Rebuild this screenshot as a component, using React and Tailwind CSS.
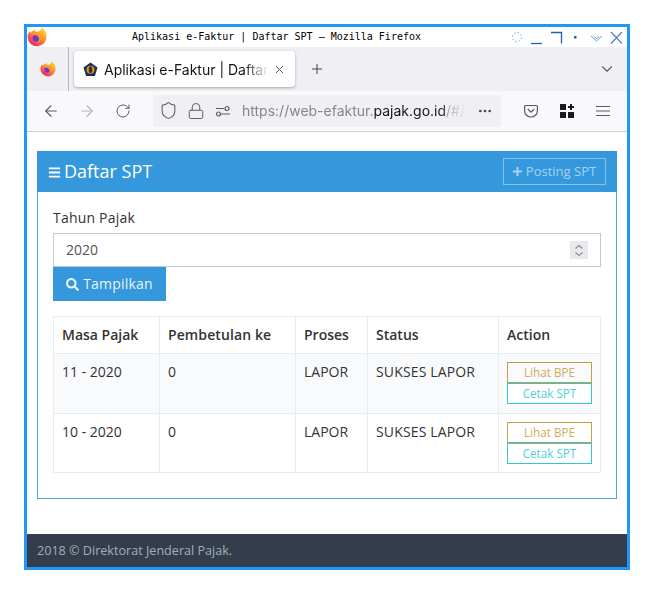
import React from "react";
import { ArrowLeft, ArrowRight, RotateCw, Shield, Lock, Plus, X, ChevronDown, Ellipsis } from "lucide-react";
import { FaBars, FaSearch, FaPlus } from "react-icons/fa";

function FirefoxLogo({ size, id }) {
  return (
    <svg width={size} height={size} viewBox="0 0 20 20" className="shrink-0">
      <defs>
        <linearGradient id={id} x1="0.85" y1="0" x2="0.15" y2="1">
          <stop offset="0" stopColor="#ffdc3e" />
          <stop offset="0.45" stopColor="#ff8f2b" />
          <stop offset="0.8" stopColor="#f5395f" />
          <stop offset="1" stopColor="#e8207e" />
        </linearGradient>
      </defs>
      <path d="M14.800.6c2.900 2 4.800 5.200 4.800 8.900a9.500 9.500 0 0 1-19 .5c0-2.300.7-4.300 2-5.700L3.900 6C5 4.200 6.600 3.200 8.600 2.800c-.5 1-.3 1.800.5 2.200 2.900-.3 5.300-1.800 5.700-4.400z" fill={`url(#${id})`} />
      <circle cx="9.300" cy="11" r="3.700" fill="#6a3bc8" />
      <path d="M5 6.300c2.300-1.400 5.500-1 7.500.8 1.400 1.300 1.900 3.100 1.500 4.900-.7 2.300-2.800 3.700-5 3.600 2-.4 3.300-1.900 3.100-3.800-.2-2.200-2-3.400-4-3.500-1.200-.1-2.400-.6-3.100-2z" fill="#ff9a2e" />
    </svg>
  );
}

function TabEmblem() {
  return (
    <svg width="15" height="15" viewBox="0 0 15 15" className="shrink-0">
      <path d="M7.500.5 14.500 5.400 11.900 14H3.100L.5 5.400z" fill="#1c2c5c" />
      <circle cx="7.500" cy="7.800" r="4" fill="#d99a1c" />
      <rect x="5.800" y="4.600" width="3.400" height="6.400" rx="1.400" fill="#3a3328" />
    </svg>
  );
}

function WindowButtons() {
  return (
    <svg width="112" height="16" viewBox="0 0 112 16" fill="none">
      <circle cx="5" cy="8" r="4.500" strokeDasharray="1.500 2" stroke="#7ea4da" />
      <path d="M19 14.500h11" stroke="#1f5fb4" strokeWidth="1.300" />
      <path d="M39 3.500h10.500v11" stroke="#1f5fb4" strokeWidth="1.300" />
      <rect x="62" y="7" width="2.500" height="2.500" fill="#1f5fb4" />
      <path d="M79 7l5.500 5 5.500-5M82 7.500l2.500 2 2.500-2" stroke="#6f9ad6" />
      <path d="M99 3l11 11.500M110 3 99 14.500" stroke="#4f80c4" strokeWidth="1.200" />
    </svg>
  );
}

function PocketIcon() {
  return (
    <svg width="14" height="14" viewBox="0 0 14 14" fill="none" stroke="#5b5b66" strokeWidth="1.200">
      <path d="M1.600 1.500h10.800a1 1 0 0 1 1 1V7a6.400 6 0 0 1-12.800 0V2.500a1 1 0 0 1 1-1z" />
      <path d="M4.200 5.500 7 8.200l2.800-2.700" strokeLinecap="round" />
    </svg>
  );
}

function ExtensionsIcon() {
  return (
    <svg width="14" height="14" viewBox="0 0 14 14" fill="#1c1b22">
      <rect x="0" y="0" width="6" height="6" />
      <rect x="0" y="8" width="6" height="6" />
      <rect x="8" y="8" width="6" height="6" />
      <path d="M10 0h2v2h2v2h-2v2h-2V4H8V2h2z" />
    </svg>
  );
}

function HamburgerIcon() {
  return (
    <svg width="14" height="12" viewBox="0 0 14 12" stroke="#5b5b66" strokeWidth="1.200">
      <path d="M0 1.500h14M0 6h14M0 10.500h14" />
    </svg>
  );
}

function SiteSettingsIcon() {
  return (
    <svg width="16" height="12" viewBox="0 0 16 12" fill="none" stroke="#5b5b66" strokeWidth="1.200">
      <path d="M1 3.500h8M1 9h.5M6 9h9" />
      <circle cx="12" cy="3.500" r="2" />
      <circle cx="3.500" cy="9" r="2" />
    </svg>
  );
}

function Row({ masa, last }) {
  return (
    <tr className={last ? "h-[59px]" : "h-[60px] bg-[#f9fafc]"}>
      <td className="border border-[#e7ecf1] px-2 pt-[7px] align-top">{masa}</td>
      <td className="border border-[#e7ecf1] px-2 pt-[7px] align-top">0</td>
      <td className="border border-[#e7ecf1] px-2 pt-[7px] align-top">LAPOR</td>
      <td className="border border-[#e7ecf1] px-2 pt-[7px] align-top tracking-[0.15px]">SUKSES LAPOR</td>
      <td className="border border-[#e7ecf1] px-2 pt-2 align-top">
        <div className="flex flex-col">
          <div className="flex h-[21px] w-[85px] items-center justify-center border border-[#c49f47] text-[11.7px] text-[#d1ac58]">Lihat BPE</div>
          <div className="h-[21px] w-[85px] bg-[#32c5d2] p-[1px]">
            <div className="flex h-full items-center justify-center bg-white text-[11.7px] text-[#4dd0dc]">Cetak SPT</div>
          </div>
        </div>
      </td>
    </tr>
  );
}

export default function App() {
  return (
    <div className="h-[594px] w-[654px] bg-white pl-6 pt-6">
      <div className="flex h-[546px] w-[606px] flex-col border-[3px] border-[#2196f3] bg-white">
        {/* window title */}
        <div className="relative flex h-5 shrink-0 items-center pb-[1px] pl-[105px] font-['DejaVu_Sans_Mono',monospace] text-[10px] text-black">
          <div className="absolute left-0 top-0">
            <FirefoxLogo size={20} id="ffa" />
          </div>
          <span>Aplikasi e-Faktur | Daftar SPT — Mozilla Firefox</span>
          <div className="absolute right-[3px] top-[2px]">
            <WindowButtons />
          </div>
        </div>

        {/* tabs */}
        <div className="flex h-11 shrink-0 items-center bg-[#f0f0f4] font-['Inter',sans-serif]">
          <div className="flex h-full w-[42px] shrink-0 items-center justify-center border-r border-[#b5b5bb]">
            <FirefoxLogo size={16} id="ffb" />
          </div>
          <div className="ml-[5px] flex h-9 w-[221px] items-center rounded bg-white pl-[9px] pr-[9px] shadow-[0_1px_3px_rgba(0,0,0,0.3)]">
            <TabEmblem />
            <span className="ml-[6px] w-[165px] overflow-hidden whitespace-nowrap text-[14px] text-[#15141a] [mask-image:linear-gradient(to_right,black_85%,transparent)]">
              Aplikasi e-Faktur | Daftar SPT
            </span>
            <X size={13} strokeWidth={1.5} className="ml-[4px] text-[#3a3a42]" />
          </div>
          <Plus size={16} strokeWidth={1.5} className="ml-[14px] text-[#45454d]" />
          <ChevronDown size={18} strokeWidth={1.5} className="ml-auto mr-[11px] text-[#5b5b66]" />
        </div>

        {/* toolbar */}
        <div className="flex h-[41px] shrink-0 items-center border-b border-[#cfcfd3] bg-[#f9f9fb] pb-[1px] font-['Inter',sans-serif]">
          <ArrowLeft size={18} strokeWidth={1.5} className="ml-[15px] text-[#5b5b66]" />
          <ArrowRight size={18} strokeWidth={1.5} className="ml-[18px] text-[#b4b4ba]" />
          <RotateCw size={16} strokeWidth={1.5} className="ml-[19px] text-[#5b5b66]" />
          <div className="ml-[22px] flex h-8 w-[348px] items-center rounded bg-[#f0f0f4] pl-[6px] pr-[8px]">
            <Shield size={19} strokeWidth={1.3} className="shrink-0 text-[#5b5b66]" />
            <Lock size={18} strokeWidth={1.3} className="ml-[9px] shrink-0 text-[#5b5b66]" />
            <span className="ml-[10px] flex shrink-0">
              <SiteSettingsIcon />
            </span>
            <span className="ml-[11px] w-[224px] overflow-hidden whitespace-nowrap text-[14px] text-[#85858c] [mask-image:linear-gradient(to_right,black_88%,transparent)]">
              https://web-efaktur.<span className="text-[#15141a]">pajak.go.id</span>/#/daftar-spt
            </span>
            <Ellipsis size={16} className="ml-auto shrink-0 text-[#45454d]" />
          </div>
          <span className="ml-[23px] flex">
            <PocketIcon />
          </span>
          <span className="ml-[22px] flex">
            <ExtensionsIcon />
          </span>
          <span className="ml-[22px] flex">
            <HamburgerIcon />
          </span>
        </div>

        {/* page */}
        <div className="flex flex-1 flex-col font-['Open_Sans',sans-serif] text-[14px] text-[#333]">
          <div className="mx-[10px] mt-[19px] h-[348px] border border-[#4aa8e8]">
            <div className="-mx-[1px] -mt-[1px] flex h-[41px] items-center justify-between bg-[#3598dc] pl-[11px] pr-[11px] text-white">
              <div className="flex items-center text-[18px]">
                <FaBars size={13} className="mr-[3px] mt-[2px]" />
                Daftar SPT
              </div>
              <button className="flex h-[27px] w-[103px] items-center justify-center border border-[#86c1ea] pr-[1px] text-[13px] text-[#a6d2f0]">
                <FaPlus size={11} className="mr-[3px]" />
                Posting SPT
              </button>
            </div>
            <div className="px-[15px] pt-[15px]">
              <div className="h-[26px] pt-[1px] leading-5 tracking-[0.2px]">Tahun Pajak</div>
              <div className="flex h-[34px] items-center justify-between border border-[#c2cad8] pb-[2px] pl-3 pr-[12px] text-[#555]">
                2020
                <div className="mt-[2px] flex h-[18px] w-[18px] flex-col items-center justify-center bg-[#e9e9ed]">
                  <svg width="10" height="13" viewBox="0 0 10 13" fill="none" stroke="#8f8f9d" strokeWidth="1.200">
                    <path d="M1.500 4.500 5 1.500l3.500 3M1.500 8.500 5 11.500l3.500-3" />
                  </svg>
                </div>
              </div>
              <button className="flex h-[34px] w-[113px] items-center justify-center bg-[#3598dc] pb-[2px] tracking-[0.2px] text-[#eaf4fb]">
                <FaSearch size={13} className="mr-[4px] mt-[2px]" />
                Tampilkan
              </button>
              <table className="mt-[15px] h-[157px] w-[547px] table-fixed border-collapse">
                <colgroup>
                  <col className="w-[106px]" />
                  <col className="w-[136px]" />
                  <col className="w-[72px]" />
                  <col className="w-[131px]" />
                  <col className="w-[102px]" />
                </colgroup>
                <thead>
                  <tr className="h-[37px] text-left font-semibold">
                    <th className="border border-[#e7ecf1] px-2 pb-[2px] font-semibold">Masa Pajak</th>
                    <th className="border border-[#e7ecf1] px-2 pb-[2px] font-semibold tracking-[0.1px]">Pembetulan ke</th>
                    <th className="border border-[#e7ecf1] px-2 pb-[2px] font-semibold">Proses</th>
                    <th className="border border-[#e7ecf1] px-2 pb-[2px] font-semibold">Status</th>
                    <th className="border border-[#e7ecf1] px-2 pb-[2px] font-semibold">Action</th>
                  </tr>
                </thead>
                <tbody>
                  <Row masa="11 - 2020" />
                  <Row masa="10 - 2020" last />
                </tbody>
              </table>
            </div>
          </div>
          <div className="mt-auto flex h-[33px] items-center bg-[#343d4b] pl-[10px] pt-[2px] text-[12.6px] text-[#a2adbd]">
            2018 © Direktorat Jenderal Pajak.
          </div>
        </div>
      </div>
    </div>
  );
}
